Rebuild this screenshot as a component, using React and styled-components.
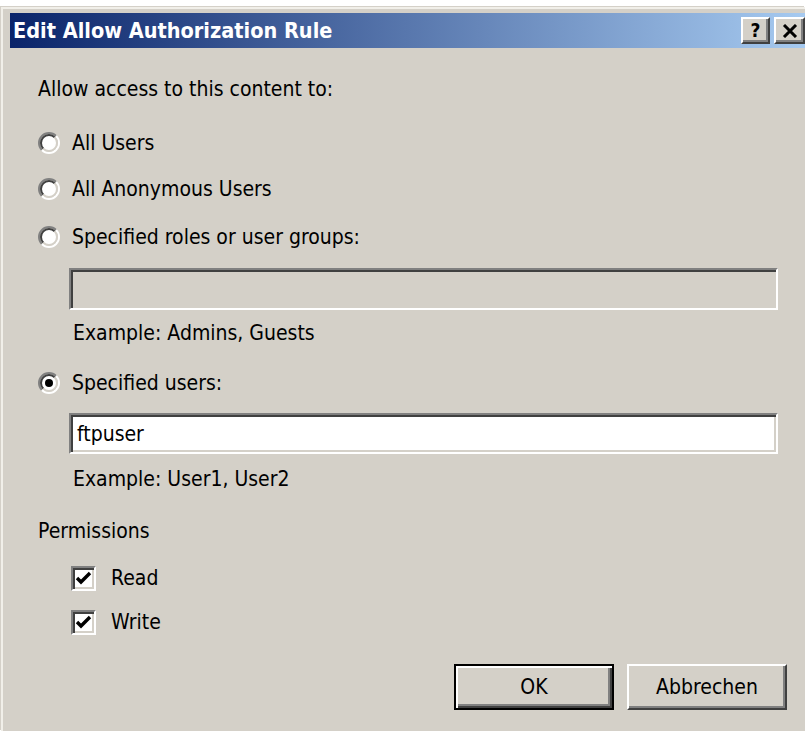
import React from 'react';
import styled, { createGlobalStyle } from 'styled-components';

const ui = `"DejaVu Sans Condensed", "DejaVu Sans", sans-serif`;

const GlobalStyle = createGlobalStyle`
  html, body {
    margin: 0;
    background: #ffffff;
    overflow: hidden;
  }
`;

const Window = styled.div`
  margin: 7px 0 0 1px;
  height: 724px;
  background: #d4d0c8;
  border-top: 2px solid #f1efe9;
  border-left: 2px solid #f1efe9;
  box-shadow: -1px -1px 0 #d4d0c8;
  padding: 4px 0 0 7px;
  box-sizing: border-box;
  font-family: ${ui};
  font-stretch: semi-condensed;
  font-size: 21px;
  color: #000;
`;

const TitleBar = styled.div`
  height: 35px;
  display: flex;
  align-items: center;
  justify-content: space-between;
  padding-left: 3px;
  background: linear-gradient(to right, #0a246a, #a6caf0);
`;

const Title = styled.span`
  color: #ffffff;
  font-weight: bold;
  font-size: 21.5px;
  white-space: nowrap;
`;

const TitleButtons = styled.div`
  display: flex;
  gap: 4px;
`;

const TitleButton = styled.div`
  width: ${p => p.$w || 29}px;
  height: 27px;
  box-sizing: border-box;
  display: flex;
  align-items: center;
  justify-content: center;
  background: #d4d0c8;
  border-top: 2px solid #ffffff;
  border-left: 2px solid #ffffff;
  border-right: 2px solid #404040;
  border-bottom: 2px solid #404040;
  box-shadow: inset -2px -2px 0 #808080;
  font-family: "DejaVu Sans", sans-serif;
  font-weight: bold;
  font-size: 19px;
  line-height: 1;
`;

const Content = styled.div`
  display: flex;
  flex-direction: column;
  padding: 29px 27px 0 28px;
`;

const Line = styled.div`
  height: 24px;
  line-height: 24px;
  margin-top: ${p => p.$gap || 0}px;
  padding-left: ${p => p.$indent || 0}px;
  white-space: nowrap;
`;

const Option = styled.label`
  display: flex;
  align-items: center;
  gap: 12px;
  height: 24px;
  margin-top: ${p => p.$gap || 0}px;
  white-space: nowrap;
`;

const Field = styled.div`
  margin: ${p => p.$gap || 0}px 0 0 31px;
  height: ${p => p.$h || 42}px;
  box-sizing: border-box;
  background: ${p => (p.$disabled ? '#d4d0c8' : '#ffffff')};
  border-top: 2px solid #808080;
  border-left: 2px solid #808080;
  border-right: 2px solid #ffffff;
  border-bottom: 2px solid #ffffff;
  box-shadow: inset 2px 2px 0 #404040, inset -2px -2px 0 #d4d0c8;
  padding: 0 6px;
  display: flex;
  align-items: center;
  white-space: nowrap;
`;

const Check = styled.label`
  display: flex;
  align-items: center;
  gap: 15px;
  height: 24px;
  margin: ${p => p.$gap || 0}px 0 0 33px;
`;

const CheckBox = styled.span`
  width: 25px;
  height: 25px;
  box-sizing: border-box;
  background: #ffffff;
  border-top: 2px solid #808080;
  border-left: 2px solid #808080;
  border-right: 2px solid #ffffff;
  border-bottom: 2px solid #ffffff;
  box-shadow: inset 2px 2px 0 #404040, inset -2px -2px 0 #d4d0c8;
  display: flex;
  align-items: center;
  justify-content: center;
`;

const Buttons = styled.div`
  display: flex;
  justify-content: flex-end;
  gap: 13px;
  margin: 30px -9px 0 0;
`;

const Button = styled.button`
  width: 160px;
  height: 46px;
  box-sizing: border-box;
  background: #d4d0c8;
  font-family: ${ui};
  font-stretch: semi-condensed;
  font-size: 21px;
  color: #000;
  padding: 0;
  border-top: 2px solid ${p => (p.$default ? '#000' : '#ffffff')};
  border-left: 2px solid ${p => (p.$default ? '#000' : '#ffffff')};
  border-right: 2px solid ${p => (p.$default ? '#000' : '#404040')};
  border-bottom: 2px solid ${p => (p.$default ? '#000' : '#404040')};
  box-shadow: ${p =>
    p.$default
      ? 'inset 2px 2px 0 #ffffff, inset -2px -2px 0 #404040, inset -4px -4px 0 #808080'
      : 'inset -2px -2px 0 #808080'};
`;

const arc = (r, from, to) => {
  const d = r * Math.SQRT1_2;
  const p = s => `${11 + s * d} ${11 - s * d}`;
  return `M ${p(from)} A ${r} ${r} 0 0 1 ${p(to)}`;
};

const Radio = ({ checked }) => (
  <svg width="22" height="22" viewBox="0 0 22 22">
    <circle cx="11" cy="11" r="8" fill="#ffffff" />
    <path d={arc(10, -1, 1)} stroke="#808080" strokeWidth="2" fill="none" />
    <path d={arc(8, -1, 1)} stroke="#404040" strokeWidth="2" fill="none" />
    <path d={arc(10, 1, -1)} stroke="#ffffff" strokeWidth="2" fill="none" />
    <path d={arc(8, 1, -1)} stroke="#d4d0c8" strokeWidth="2" fill="none" />
    {checked && <circle cx="11" cy="11" r="4" fill="#000" />}
  </svg>
);

const Tick = () => (
  <svg width="17" height="17" viewBox="0 0 17 17">
    <polyline points="2,8 6,12 15,3" stroke="#000" strokeWidth="3.4" fill="none" />
  </svg>
);

const CloseGlyph = () => (
  <svg width="16" height="14" viewBox="0 0 16 14">
    <path d="M2 1 L14 13 M14 1 L2 13" stroke="#000" strokeWidth="3" />
  </svg>
);

const App = () => (
  <>
    <GlobalStyle />
    <Window>
      <TitleBar>
        <Title>Edit Allow Authorization Rule</Title>
        <TitleButtons>
          <TitleButton>?</TitleButton>
          <TitleButton $w={31}>
            <CloseGlyph />
          </TitleButton>
        </TitleButtons>
      </TitleBar>
      <Content>
        <Line>Allow access to this content to:</Line>
        <Option $gap={30}>
          <Radio />
          All Users
        </Option>
        <Option $gap={22}>
          <Radio />
          All Anonymous Users
        </Option>
        <Option $gap={24}>
          <Radio />
          Specified roles or user groups:
        </Option>
        <Field $gap={19} $disabled />
        <Line $gap={11} $indent={35}>
          Example: Admins, Guests
        </Line>
        <Option $gap={26}>
          <Radio checked />
          Specified users:
        </Option>
        <Field $gap={18} $h={41}>
          ftpuser
        </Field>
        <Line $gap={13} $indent={35}>
          Example: User1, User2
        </Line>
        <Line $gap={28}>Permissions</Line>
        <Check $gap={23}>
          <CheckBox>
            <Tick />
          </CheckBox>
          Read
        </Check>
        <Check $gap={20}>
          <CheckBox>
            <Tick />
          </CheckBox>
          Write
        </Check>
        <Buttons>
          <Button $default>OK</Button>
          <Button>Abbrechen</Button>
        </Buttons>
      </Content>
    </Window>
  </>
);

export default App;
